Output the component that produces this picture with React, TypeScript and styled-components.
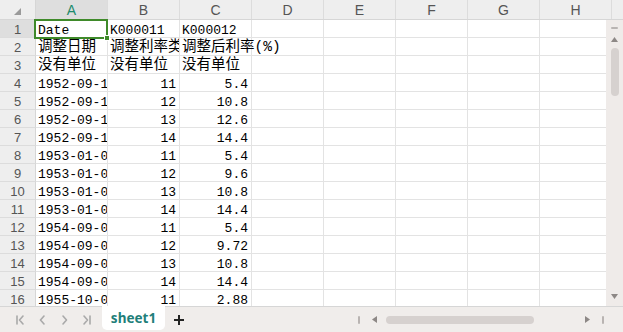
import styled, { createGlobalStyle } from 'styled-components'

const GlobalStyle = createGlobalStyle`
  html, body {
    margin: 0;
    padding: 0;
    background: #ffffff;
  }
`

const COLS = ['A', 'B', 'C', 'D', 'E', 'F', 'G', 'H']

type CellData = { text: string; align?: 'left' | 'right'; cjk?: boolean; spill?: boolean }

const rows: CellData[][] = [
  [{ text: 'Date' }, { text: 'K000011' }, { text: 'K000012' }],
  [
    { text: '调整日期', cjk: true },
    { text: '调整利率类', cjk: true },
    { text: '调整后利率(%)', cjk: true, spill: true },
  ],
  [
    { text: '没有单位', cjk: true },
    { text: '没有单位', cjk: true },
    { text: '没有单位', cjk: true },
  ],
  ...[
    ['1952-09-15', '11', '5.4'],
    ['1952-09-15', '12', '10.8'],
    ['1952-09-15', '13', '12.6'],
    ['1952-09-15', '14', '14.4'],
    ['1953-01-01', '11', '5.4'],
    ['1953-01-01', '12', '9.6'],
    ['1953-01-01', '13', '10.8'],
    ['1953-01-01', '14', '14.4'],
    ['1954-09-01', '11', '5.4'],
    ['1954-09-01', '12', '9.72'],
    ['1954-09-01', '13', '10.8'],
    ['1954-09-01', '14', '14.4'],
    ['1955-10-01', '11', '2.88'],
  ].map(([d, k1, k2]) => [
    { text: d },
    { text: k1, align: 'right' as const },
    { text: k2, align: 'right' as const },
  ]),
]

const Frame = styled.div`
  width: 623px;
  height: 332px;
  display: flex;
  flex-direction: column;
  overflow: hidden;
  background: #ffffff;
`

const HeaderRow = styled.div`
  display: flex;
  height: 20px;
  flex-shrink: 0;
  background: #eeeeee;
  border-bottom: 1px solid #d6d6d6;
  box-sizing: border-box;
`

const Corner = styled.div`
  width: 36px;
  flex-shrink: 0;
  position: relative;
  border-right: 1px solid #d6d6d6;
  box-sizing: border-box;
`

const CornerMark = styled.svg`
  position: absolute;
  left: 14px;
  top: 8px;
`

const ColHeader = styled.div<{ $active?: boolean }>`
  width: 72px;
  flex-shrink: 0;
  box-sizing: border-box;
  border-right: 1px solid #dcdcdc;
  display: flex;
  align-items: center;
  justify-content: center;
  padding-top: 1px;
  font-family: 'Liberation Sans', Arial, sans-serif;
  font-size: 14px;
  color: ${p => (p.$active ? '#1d8a6b' : '#555555')};
  background: ${p => (p.$active ? '#dedede' : 'transparent')};
`

const Body = styled.div`
  flex: 1;
  display: flex;
  min-height: 0;
`

const Grid = styled.div`
  flex: 1;
  min-width: 0;
  display: flex;
  flex-direction: column;
`

const Row = styled.div`
  display: flex;
  height: 18px;
  flex-shrink: 0;
`

const RowHeader = styled.div<{ $active?: boolean }>`
  width: 36px;
  flex-shrink: 0;
  box-sizing: border-box;
  border-right: 1px solid #d6d6d6;
  border-bottom: 1px solid #dcdcdc;
  background: ${p => (p.$active ? '#dedede' : '#eeeeee')};
  color: #555555;
  font-family: 'Liberation Sans', Arial, sans-serif;
  font-size: 13px;
  display: flex;
  align-items: center;
  justify-content: center;
  padding-top: 1px;
`

const Cell = styled.div<{ $raised?: boolean }>`
  width: 72px;
  height: 18px;
  flex-shrink: 0;
  box-sizing: border-box;
  position: relative;
  border-right: 1px solid #e3e3e3;
  border-bottom: 1px solid #e3e3e3;
  z-index: ${p => (p.$raised ? 1 : 'auto')};
`

const CellText = styled.div<{ $align?: string; $cjk?: boolean; $spill?: boolean }>`
  padding: 0 3px 0 2px;
  height: 17px;
  white-space: nowrap;
  overflow: ${p => (p.$spill ? 'visible' : 'hidden')};
  text-align: ${p => p.$align ?? 'left'};
  font-family: 'Liberation Mono', 'Noto Sans CJK SC', monospace;
  font-size: ${p => (p.$cjk ? '14.5px' : '13px')};
  line-height: ${p => (p.$cjk ? '19px' : '21px')};
  color: #000000;
`

const Selection = styled.div`
  position: absolute;
  left: -2px;
  top: -1px;
  width: 74px;
  height: 20px;
  box-sizing: border-box;
  border: 2px solid #3f8a2a;
  z-index: 2;
  pointer-events: none;
`

const Handle = styled.div`
  position: absolute;
  right: -4px;
  bottom: -4px;
  width: 4px;
  height: 4px;
  background: #3f8a2a;
  border: 1px solid #ffffff;
`

const VScroll = styled.div`
  width: 17px;
  flex-shrink: 0;
  position: relative;
  z-index: 3;
  background: #efebe9;
  display: flex;
  flex-direction: column;
  align-items: center;
  padding: 7px 0 7px;
  box-sizing: border-box;
`

const Dash = styled.div<{ $vertical?: boolean }>`
  background: #b9b4b2;
  width: ${p => (p.$vertical ? '2px' : '7px')};
  height: ${p => (p.$vertical ? '8px' : '2px')};
  border-radius: 1px;
`

const Gap = styled.div<{ $size: number }>`
  flex-shrink: 0;
  width: ${p => p.$size}px;
  height: ${p => p.$size}px;
`

const VThumb = styled.div`
  width: 8px;
  height: 48px;
  border-radius: 4px;
  background: #d6d1cf;
  margin-top: 6px;
`

const Spacer = styled.div`
  flex: 1;
`

const BottomBar = styled.div`
  height: 26px;
  flex-shrink: 0;
  position: relative;
  z-index: 4;
  background: #f0edeb;
  border-top: 1px solid #d6d6d6;
  box-sizing: border-box;
  display: flex;
  align-items: flex-start;
`

const NavGroup = styled.div`
  display: flex;
  align-items: center;
  height: 25px;
  gap: 11px;
  padding-left: 15px;
  width: 87px;
`

const Tab = styled.div`
  width: 63px;
  height: 24px;
  margin-top: -1px;
  background: #ffffff;
  border-radius: 0 0 5px 5px;
  display: flex;
  align-items: center;
  justify-content: center;
  font-family: 'Noto Sans', 'Liberation Sans', sans-serif;
  font-weight: 700;
  font-size: 13.5px;
  color: #1f7f7a;
`

const AddButton = styled.div`
  height: 25px;
  margin-left: 8px;
  display: flex;
  align-items: center;
`

const HScroll = styled.div`
  margin-left: auto;
  width: 246px;
  height: 25px;
  display: flex;
  align-items: center;
  padding-right: 19px;
`

const HThumb = styled.div`
  width: 148px;
  height: 8px;
  border-radius: 4px;
  background: #d6d1cf;
  margin-left: 9px;
`

const Tri = ({ dir }: { dir: 'up' | 'down' | 'left' | 'right' }) => {
  const pts = {
    up: '0,5 3.5,0 7,5',
    down: '0,0 7,0 3.5,5',
    left: '5,0 5,7 0,3.5',
    right: '0,0 0,7 5,3.5',
  }[dir]
  const vertical = dir === 'up' || dir === 'down'
  return (
    <svg width={vertical ? 7 : 5} height={vertical ? 5 : 7} viewBox={vertical ? '0 0 7 5' : '0 0 5 7'}>
      <polygon points={pts} fill="#8d8886" />
    </svg>
  )
}

const Chevron = ({ d }: { d: string }) => (
  <svg width="11" height="12" viewBox="0 0 11 12" fill="none" stroke="#a9a9a9" strokeWidth="1.6" strokeLinecap="round" strokeLinejoin="round">
    <path d={d} />
  </svg>
)

export default function App() {
  return (
    <Frame>
      <GlobalStyle />
      <HeaderRow>
        <Corner>
          <CornerMark width="7" height="7" viewBox="0 0 7 7">
            <polygon points="7,0 7,7 0,7" fill="#9a9a9a" />
          </CornerMark>
        </Corner>
        {COLS.map(c => (
          <ColHeader key={c} $active={c === 'A'}>
            {c}
          </ColHeader>
        ))}
      </HeaderRow>
      <Body>
        <Grid>
          {rows.map((cells, r) => (
            <Row key={r}>
              <RowHeader $active={r === 0}>{r + 1}</RowHeader>
              {COLS.map((c, ci) => {
                const cell = cells[ci]
                const selected = r === 0 && ci === 0
                return (
                  <Cell key={c} $raised={cell?.spill || selected}>
                    {cell && (
                      <CellText $align={cell.align} $cjk={cell.cjk} $spill={cell.spill}>
                        {cell.text}
                      </CellText>
                    )}
                    {selected && (
                      <Selection>
                        <Handle />
                      </Selection>
                    )}
                  </Cell>
                )
              })}
            </Row>
          ))}
        </Grid>
        <VScroll>
          <Dash />
          <Gap $size={8} />
          <Tri dir="up" />
          <VThumb />
          <Spacer />
          <Tri dir="down" />
        </VScroll>
      </Body>
      <BottomBar>
        <NavGroup>
          <Chevron d="M2 2v8M8 2L4.5 6 8 10" />
          <Chevron d="M7 2L3.5 6 7 10" />
          <Chevron d="M4 2l3.5 4L4 10" />
          <Chevron d="M3 2l3.5 4L3 10M9 2v8" />
        </NavGroup>
        <Tab>sheet1</Tab>
        <AddButton>
          <svg width="12" height="12" viewBox="0 0 12 12" stroke="#222222" strokeWidth="2">
            <path d="M6 1v10M1 6h10" />
          </svg>
        </AddButton>
        <HScroll>
          <Dash $vertical />
          <Gap $size={12} />
          <Tri dir="left" />
          <HThumb />
          <Spacer />
          <Tri dir="right" />
          <Gap $size={12} />
          <Dash $vertical />
        </HScroll>
      </BottomBar>
    </Frame>
  )
}
